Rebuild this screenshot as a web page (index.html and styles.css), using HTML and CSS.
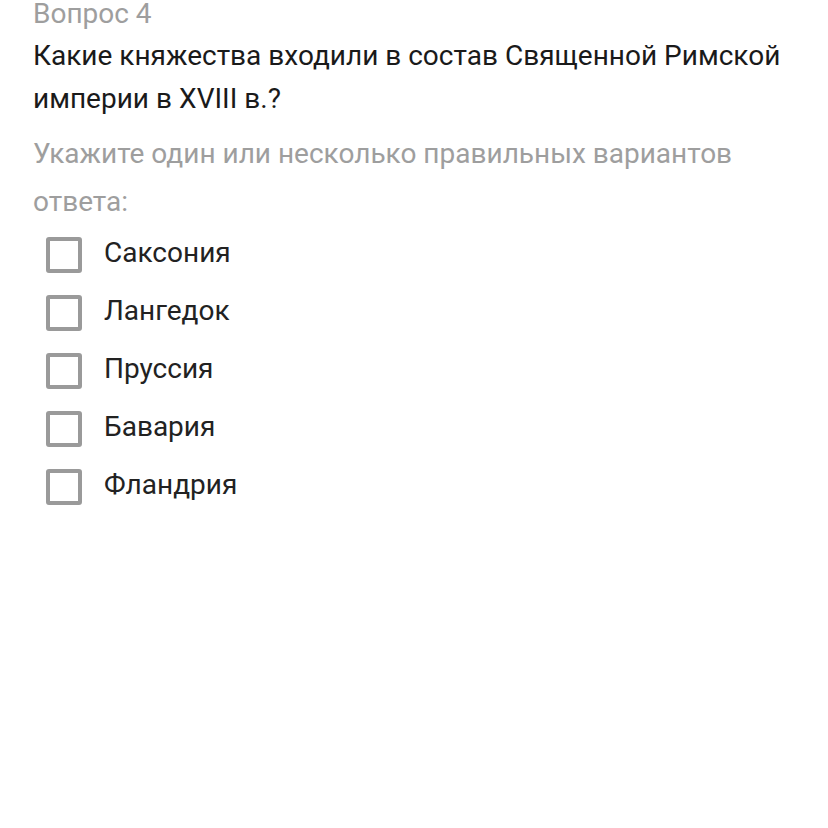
FILE: index.html
```html
<!DOCTYPE html>
<html lang="ru">
<head>
<meta charset="utf-8">
<link rel="stylesheet" href="styles.css">
</head>
<body>
<div class="page">
  <div class="qnum">Вопрос 4</div>
  <div class="qtitle">Какие княжества входили в состав Священной Римской империи в XVIII в.?</div>
  <div class="hint">Укажите один или несколько правильных вариантов ответа:</div>
  <ul class="options">
    <li class="option"><span class="box"></span><span class="label">Саксония</span></li>
    <li class="option"><span class="box"></span><span class="label">Лангедок</span></li>
    <li class="option"><span class="box"></span><span class="label">Пруссия</span></li>
    <li class="option"><span class="box"></span><span class="label">Бавария</span></li>
    <li class="option"><span class="box"></span><span class="label">Фландрия</span></li>
  </ul>
</div>
</body>
</html>
```
FILE: styles.css
```css
html, body {
  margin: 0;
  padding: 0;
  background: #ffffff;
}
.page {
  padding: 0 40px 0 33px;
  font-family: Roboto, "Noto Sans", sans-serif;
  font-size: 28px;
}
.qnum {
  color: #9e9e9e;
  line-height: 28px;
}
.qtitle {
  margin-top: 6px;
  color: #1a1a1a;
  line-height: 43px;
}
.hint {
  margin-top: 10px;
  color: #9e9e9e;
  line-height: 48px;
}
.options {
  list-style: none;
  margin: 0;
  padding: 0;
}
.option {
  display: flex;
  align-items: center;
  height: 58px;
  padding-left: 13px;
}
.box {
  box-sizing: border-box;
  width: 36px;
  height: 36px;
  border: 4px solid #9a9a9a;
  border-radius: 3px;
  flex: none;
}
.label {
  margin-left: 22px;
  color: #222222;
  line-height: 28px;
  margin-top: -5px;
}
```
